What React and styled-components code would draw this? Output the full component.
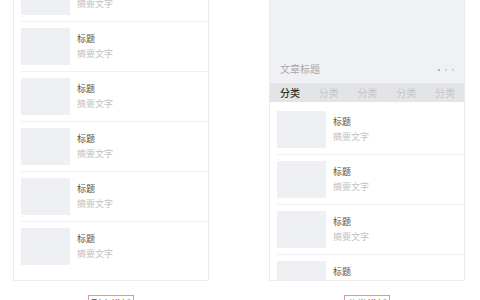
import styled, { createGlobalStyle } from "styled-components";

const Global = createGlobalStyle`
  html, body { margin: 0; padding: 0; background: #fff; }
  body {
    font-family: "Noto Sans CJK SC", "Noto Sans", sans-serif;
    overflow: hidden;
  }
`;

const Page = styled.div`
  display: flex;
  align-items: flex-start;
  gap: 60px;
  padding-left: 13px;
  height: 300px;
  overflow: hidden;
`;

const Column = styled.div`
  width: 196px;
  flex-shrink: 0;
  display: flex;
  flex-direction: column;
  align-items: center;
`;

const Panel = styled.div`
  width: 100%;
  height: 281px;
  flex-shrink: 0;
  box-sizing: border-box;
  border: 1px solid #ececec;
  border-top: none;
  background: #fff;
  display: flex;
  flex-direction: column;
  justify-content: ${(p) => (p.$bottom ? "flex-end" : "flex-start")};
  overflow: hidden;
`;

const List = styled.div`
  display: flex;
  flex-direction: column;
  flex-shrink: 0;
  padding: ${(p) => p.$pad || "0"};
`;

const Item = styled.div`
  display: flex;
  gap: 7px;
  margin-left: 7px;
  padding: 6px 0 6px;
  border-bottom: 1px solid #f1f1f1;
  flex-shrink: 0;
  &:last-child { border-bottom: none; }
`;

const Thumb = styled.div`
  width: 49px;
  height: 37px;
  background: #eef0f3;
  flex-shrink: 0;
`;

const Text = styled.div`
  display: flex;
  flex-direction: column;
  padding-top: 3px;
`;

const Title = styled.div`
  font-size: 9px;
  line-height: 15px;
  color: #505050;
`;

const Summary = styled.div`
  font-size: 9px;
  line-height: 15px;
  color: #c2c2c2;
`;

const Banner = styled.div`
  height: 83px;
  flex-shrink: 0;
  background: #f0f1f4;
  display: flex;
  align-items: flex-end;
  justify-content: space-between;
  padding: 0 10px 7px 10px;
  box-sizing: border-box;
`;

const BannerTitle = styled.div`
  font-size: 10px;
  line-height: 14px;
  color: #a9a9a9;
`;

const Dots = styled.div`
  display: flex;
  gap: 5px;
  margin-bottom: 5px;
`;

const Dot = styled.span`
  width: 2px;
  height: 2px;
  border-radius: 50%;
  background: ${(p) => (p.$on ? "#9a9a9a" : "#c4c4c4")};
`;

const Tabs = styled.div`
  height: 19px;
  flex-shrink: 0;
  background: #e3e4e7;
  display: flex;
  align-items: center;
  justify-content: space-between;
  padding: 0 9px 0 10px;
`;

const Tab = styled.span`
  font-size: 10px;
  line-height: 19px;
  color: ${(p) => (p.$active ? "#333" : "#c3c4c7")};
  font-weight: ${(p) => (p.$active ? 500 : 400)};
`;

const Label = styled.div`
  margin-top: 14px;
  flex-shrink: 0;
  border: 1px solid #caa3a3;
  padding: 1px 2px;
  font-size: 10px;
  line-height: 14px;
  color: #555;
`;

const Row = () => (
  <Item>
    <Thumb />
    <Text>
      <Title>标题</Title>
      <Summary>摘要文字</Summary>
    </Text>
  </Item>
);

export default function App() {
  return (
    <>
      <Global />
      <Page>
        <Column>
          <Panel $bottom>
            <List $pad="0 0 9px 0">
              {[0, 1, 2, 3, 4, 5].map((i) => (
                <Row key={i} />
              ))}
            </List>
          </Panel>
          <Label>列表模板</Label>
        </Column>
        <Column>
          <Panel>
            <Banner>
              <BannerTitle>文章标题</BannerTitle>
              <Dots>
                <Dot $on />
                <Dot />
                <Dot />
              </Dots>
            </Banner>
            <Tabs>
              {[0, 1, 2, 3, 4].map((i) => (
                <Tab key={i} $active={i === 0}>
                  分类
                </Tab>
              ))}
            </Tabs>
            <List $pad="3px 0 0 0">
              {[0, 1, 2, 3].map((i) => (
                <Row key={i} />
              ))}
            </List>
          </Panel>
          <Label>分类模板</Label>
        </Column>
      </Page>
    </>
  );
}
